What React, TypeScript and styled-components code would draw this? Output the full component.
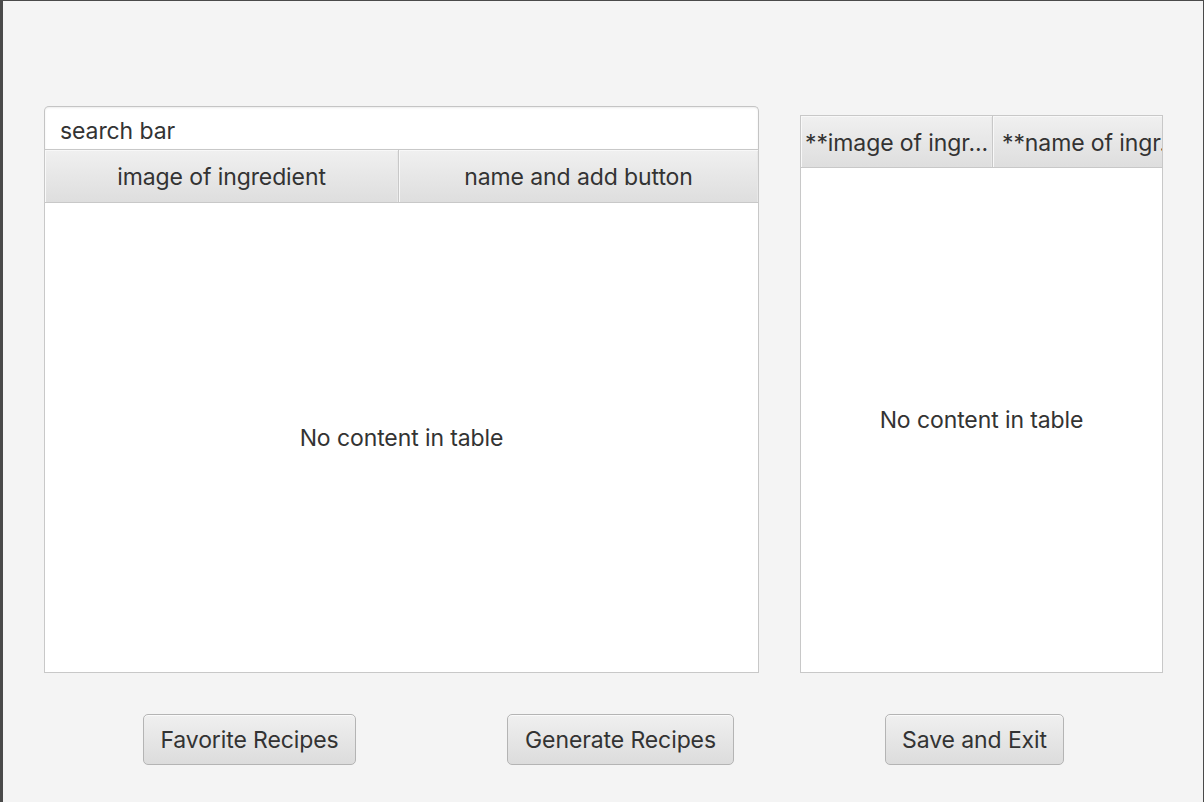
import React from "react";
import styled, { createGlobalStyle } from "styled-components";

const Global = createGlobalStyle`
  html, body { margin: 0; padding: 0; background: #f4f4f4; }
  body { font-family: Inter, "Open Sans", "Liberation Sans", sans-serif; color: #333; }
  * { box-sizing: border-box; }
`;

const Window = styled.div`
  width: 1204px;
  height: 802px;
  background: #f4f4f4;
  border-left: 3px solid #4a4a4a;
  border-top: 1px solid #4a4a4a;
  border-right: 1px solid #4a4a4a;
  display: flex;
  flex-direction: column;
  overflow: hidden;
`;

const Panels = styled.div`
  display: flex;
  align-items: flex-end;
  gap: 41px;
  padding-left: 41px;
  height: 672px;
`;

const LeftPanel = styled.div`
  width: 715px;
  height: 567px;
  display: flex;
  flex-direction: column;
`;

const SearchBar = styled.div`
  height: 43px;
  background: #fff;
  border: 1px solid #c4c4c4;
  border-bottom: none;
  border-radius: 5px 5px 0 0;
  box-shadow: inset 0 1px 2px rgba(0,0,0,0.08);
  padding: 5px 15px 0;
  display: flex;
  align-items: center;
  font-size: 23px;
  letter-spacing: -0.1px;
  color: #333;
`;

const Table = styled.div<{ $h: number }>`
  height: ${(p) => p.$h}px;
  border: 1px solid #c8c8c8;
  background: #fff;
  display: flex;
  flex-direction: column;
  overflow: hidden;
`;

const HeaderRow = styled.div<{ $cols: string; $h: number }>`
  display: grid;
  grid-template-columns: ${(p) => p.$cols};
  height: ${(p) => p.$h}px;
  border-bottom: 1px solid #c8c8c8;
  background: #c8c8c8;
  gap: 1px;
  flex-shrink: 0;
`;

const HeaderCell = styled.div`
  background: linear-gradient(#f0f0f0, #dedede);
  box-shadow: inset 1px 1px 0 #f8f8f8, inset -1px 0 0 #e8e8e8;
  display: flex;
  align-items: center;
  justify-content: center;
  font-size: 23px;
  letter-spacing: -0.1px;
  color: #333;
  white-space: nowrap;
  overflow: hidden;
  padding: 2px 6px 0;
`;

const ClipCell = styled(HeaderCell)`
  justify-content: flex-start;
  padding-left: 9px;
`;

const Empty = styled.div`
  flex: 1;
  display: flex;
  align-items: center;
  justify-content: center;
  font-size: 23px;
  letter-spacing: -0.1px;
  color: #333;
`;

const RightPanel = styled.div`
  width: 363px;
`;

const Buttons = styled.div`
  display: flex;
  gap: 151px;
  padding-left: 140px;
  padding-top: 41px;
`;

const Button = styled.button<{ $w: number }>`
  width: ${(p) => p.$w}px;
  height: 51px;
  border: 1px solid #b4b4b4;
  border-radius: 5px;
  background: linear-gradient(#f0f0f0, #dcdcdc);
  box-shadow: inset 0 1px 0 #fafafa;
  font-family: Inter, "Open Sans", "Liberation Sans", sans-serif;
  font-size: 23px;
  letter-spacing: -0.1px;
  color: #333;
  padding: 0;
  cursor: pointer;
`;

export default function App() {
  return (
    <>
      <Global />
      <Window>
        <Panels>
          <LeftPanel>
            <SearchBar>search bar</SearchBar>
            <Table $h={524}>
              <HeaderRow $cols="353px 1fr" $h={53}>
                <HeaderCell>image of ingredient</HeaderCell>
                <HeaderCell>name and add button</HeaderCell>
              </HeaderRow>
              <Empty>No content in table</Empty>
            </Table>
          </LeftPanel>
          <RightPanel>
            <Table $h={558}>
              <HeaderRow $cols="191px 191px" $h={52}>
                <HeaderCell>**image of ingr...</HeaderCell>
                <ClipCell>**name of ingr.</ClipCell>
              </HeaderRow>
              <Empty>No content in table</Empty>
            </Table>
          </RightPanel>
        </Panels>
        <Buttons>
          <Button $w={213}>Favorite Recipes</Button>
          <Button $w={227}>Generate Recipes</Button>
          <Button $w={179}>Save and Exit</Button>
        </Buttons>
      </Window>
    </>
  );
}
